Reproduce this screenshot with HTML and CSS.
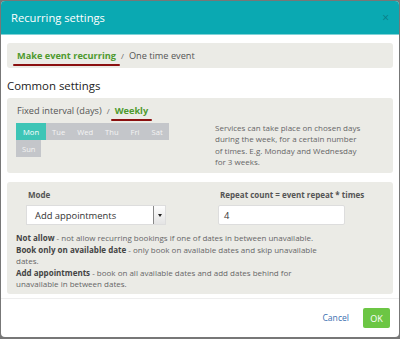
FILE: index.html
```html
<!DOCTYPE html>
<html lang="en">

<head>
  <meta charset="UTF-8">
  <meta name="viewport" content="width=device-width, initial-scale=1.0">
  <title>Recurring settings</title>
  <link rel="stylesheet" href="styles.css">
</head>

<body>
  <div class="modal">
    <header class="modal-header">
      <h1 class="modal-title">Recurring settings</h1>
      <span class="close">&times;</span>
    </header>

    <div class="modal-body">
      <div class="panel crumbs">
        <span class="tab active marked">Make event recurring</span>
        <span class="sep">/</span>
        <span class="tab">One time event</span>
      </div>

      <h2 class="section-title">Common settings</h2>

      <div class="panel weekly">
        <div class="crumbs-inline">
          <span class="tab">Fixed interval (days)</span>
          <span class="sep">/</span>
          <span class="tab active marked">Weekly</span>
        </div>
        <div class="row">
          <div class="days">
            <span class="day on">Mon</span>
            <span class="day">Tue</span>
            <span class="day">Wed</span>
            <span class="day">Thu</span>
            <span class="day">Fri</span>
            <span class="day">Sat</span>
            <span class="day">Sun</span>
          </div>
          <div class="hint">
            Services can take place on chosen days during the week, for a certain number of times. E.g. Monday and
            Wednesday for 3 weeks.
          </div>
        </div>
      </div>

      <div class="panel mode">
        <div class="row">
          <div class="col field">
            <label class="label">Mode</label>
            <div class="select">
              <span>Add appointments</span>
              <span class="caret"></span>
            </div>
          </div>
          <div class="col field right">
            <label class="label">Repeat count = event repeat * times</label>
            <div class="input">4</div>
          </div>
        </div>
        <div class="notes">
          <p><b>Not allow</b> - not allow recurring bookings if one of dates in between unavailable.</p>
          <p><b>Book only on available date</b> - only book on available dates and skip unavailable dates.</p>
          <p><b>Add appointments</b> - book on all available dates and add dates behind for unavailable in between dates.</p>
        </div>
      </div>
    </div>

    <footer class="modal-footer">
      <a class="cancel">Cancel</a>
      <button class="ok">OK</button>
    </footer>
  </div>
</body>

</html>
```

FILE: styles.css
```css
html {
  box-sizing: border-box;
}

*,
*::before,
*::after {
  box-sizing: inherit;
}

body {
  margin: 0;
  padding: 1px 1px 2px 1px;
  background-color: #777;
  font-family: "Open Sans", sans-serif;
  color: #555;
}

.modal {
  height: 336px;
  background-color: #fff;
  border-radius: 4px;
  overflow: hidden;
  display: flex;
  flex-direction: column;
}

.modal-header {
  height: 34px;
  padding: 0 10px;
  display: flex;
  align-items: center;
  justify-content: space-between;
  background-color: #0aa9b2;
  border-bottom: 1px solid #7fd2d6;
}

.modal-title {
  margin: 0;
  font-size: 11.2px;
  font-weight: 400;
  color: #fff;
}

.close {
  font-size: 12px;
  color: #0a7d86;
}

.modal-body {
  padding: 8px 6px 4px 6px;
  border-bottom: 1px solid #eee;
}

.panel {
  background-color: #ebebe6;
  border-radius: 3px;
}

.crumbs {
  height: 25px;
  padding: 0 10px;
  display: flex;
  align-items: center;
  gap: 5px;
}

.tab {
  position: relative;
  font-size: 9.2px;
  color: #555;
}

.tab.active {
  font-weight: 700;
  color: #4e9a2e;
}

.tab.marked::after {
  content: "";
  position: absolute;
  left: -4px;
  right: -4px;
  bottom: -4px;
  height: 2px;
  border-radius: 1px;
  background-color: #8b1010;
}

.sep {
  font-size: 8px;
  color: #666;
}

.section-title {
  margin: 10px 0 5px 0;
  font-size: 11.4px;
  font-weight: 400;
  color: #222;
}

.weekly {
  height: 75px;
  padding: 5px 9px 0 9px;
}

.crumbs-inline {
  padding-left: 1px;
  display: flex;
  align-items: center;
  gap: 5px;
  height: 14px;
}

.row {
  display: flex;
}

.col {
  flex: 1;
}

.days {
  flex: 0 0 190px;
  padding-right: 20px;
  display: flex;
  flex-wrap: wrap;
  align-content: flex-start;
  margin-top: 6px;
}

.day {
  height: 17px;
  padding: 0 6px;
  display: flex;
  align-items: center;
  justify-content: center;
  background-color: #c4c6ca;
  color: #f4f4f4;
  font-size: 7.6px;
}

.day.on {
  padding: 0 7px;
  background-color: #3ec5b6;
  color: #fff;
}

.hint {
  flex: 0 0 158px;
  margin-top: 5px;
  padding-left: 9px;
  font-size: 8px;
  line-height: 11.4px;
  color: #666;
}

.mode {
  height: 112px;
  margin-top: 9px;
  padding: 7px 9px 0 9px;
}

.field {
  padding-left: 10px;
}

.field.right {
  padding-left: 26px;
}

.label {
  display: block;
  padding-left: 2px;
  font-size: 8px;
  font-weight: 700;
  color: #555;
}

.select {
  width: 140px;
  height: 20px;
  margin-top: 5px;
  padding-left: 8px;
  display: flex;
  align-items: center;
  justify-content: space-between;
  background-color: #fff;
  border: 1px solid #ddd;
  font-size: 9.4px;
  color: #333;
}

.caret {
  width: 12px;
  height: 18px;
  border-left: 1px solid #888;
  background: linear-gradient(#fdfdfd, #e4e4e4);
  position: relative;
}

.caret::after {
  content: "";
  position: absolute;
  left: 4px;
  top: 8px;
  border: 2px solid transparent;
  border-top: 3px solid #222;
}

.input {
  width: 127px;
  height: 20px;
  margin-top: 5px;
  padding-left: 5px;
  display: flex;
  align-items: center;
  background-color: #fff;
  border: 1px solid #ddd;
  border-radius: 2px;
  font-size: 9.4px;
  color: #333;
}

.notes {
  width: 312px;
  margin-top: 7px;
  font-size: 8px;
  line-height: 11.5px;
  color: #666;
}

.notes p {
  margin: 0;
}

.notes b {
  color: #444;
}

.modal-footer {
  flex: 1;
  padding: 0 9px 0 0;
  display: flex;
  align-items: center;
  justify-content: flex-end;
  gap: 14px;
}

.cancel {
  font-size: 8.6px;
  color: #3a6fb0;
}

.ok {
  width: 27px;
  height: 20px;
  padding: 0;
  border: 0;
  border-radius: 2px;
  background-color: #6cc644;
  color: #fff;
  font-family: "Open Sans", sans-serif;
  font-size: 9px;
}
```
